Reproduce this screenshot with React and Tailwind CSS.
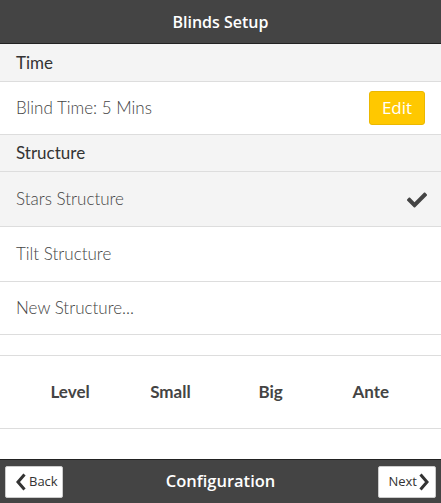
import React from 'react';

const Check = () => (
  <svg viewBox="0 0 512 512" className="w-[20px] h-[20px] fill-[#444]">
    <path d="M173.9 439.4l-166.4-166.4c-10-10-10-26.2 0-36.2l36.2-36.2c10-10 26.2-10 36.2 0L192 312.7 432.1 72.6c10-10 26.2-10 36.2 0l36.2 36.2c10 10 10 26.2 0 36.2l-294.4 294.4c-10 10-26.2 10-36.2 0z" />
  </svg>
);

const Chevron = ({ dir }) => (
  <svg viewBox="0 0 10 18" className="w-[10px] h-[18px]">
    <polyline
      points={dir === 'left' ? '8.5,1.5 2,9 8.5,16.5' : '1.5,1.5 8,9 1.5,16.5'}
      fill="none"
      stroke="#333"
      strokeWidth="3"
    />
  </svg>
);

const SectionHeader = ({ children, h }) => (
  <div className={`${h} shrink-0 flex items-center px-4 bg-[#f4f4f4] border-b border-[#ddd] text-[17px] text-[#333]`}>
    {children}
  </div>
);

const Row = ({ children, right, active, h = 'h-[55px]' }) => (
  <div
    className={`${h} shrink-0 flex items-center justify-between px-4 border-b border-[#ddd] text-[17px] text-[#444] ${
      active ? 'bg-[#f4f4f4]' : 'bg-white'
    }`}
  >
    <span className="font-light">{children}</span>
    {right}
  </div>
);

export default function App() {
  return (
    <div className="w-[441px] h-[503px] flex flex-col bg-white overflow-hidden font-['Lato',sans-serif]">
      {/* Header */}
      <div className="h-[44px] shrink-0 flex items-center justify-center bg-[#444] border-b border-[#222] font-['Open_Sans',sans-serif] font-semibold text-[16px] text-white">
        Blinds Setup
      </div>

      <SectionHeader h="h-[38px]">Time</SectionHeader>
      <Row
        h="h-[53px]"
        right={
          <button className="w-[56px] h-[34px] rounded-[3px] bg-[#ffc800] border border-[#ebb800] text-white text-[17px] font-normal font-['Open_Sans',sans-serif]">
            Edit
          </button>
        }
      >
        Blind Time: 5 Mins
      </Row>

      <SectionHeader h="h-[37px]">Structure</SectionHeader>
      <Row active right={<span className="-mr-[2px] mt-[1px]"><Check /></span>}>Stars Structure</Row>
      <Row>Tilt Structure</Row>
      <Row h="h-[53px]">New Structure...</Row>

      <div className="h-[21px] shrink-0 border-b border-[#ddd]" />

      {/* Columns */}
      <div className="h-[73px] shrink-0 border-b border-[#ddd] px-5 grid grid-cols-4 items-center text-center font-bold text-[17px] text-[#444]">
        <span>Level</span>
        <span>Small</span>
        <span>Big</span>
        <span>Ante</span>
      </div>

      <div className="flex-1" />

      {/* Footer */}
      <div className="h-[44px] shrink-0 flex items-center justify-between px-[5px] bg-[#444] border-t border-[#222] font-['Open_Sans',sans-serif]">
        <button className="w-[58px] h-[32px] flex items-center gap-[3px] pl-[10px] bg-white border border-[#ccc] rounded-[2px] text-[13px] text-[#333]">
          <Chevron dir="left" />
          Back
        </button>
        <span className="font-semibold text-[16.5px] text-white">Configuration</span>
        <button className="w-[58px] h-[32px] flex items-center justify-end gap-[2px] pr-[6px] bg-white border border-[#ccc] rounded-[2px] text-[13px] text-[#333]">
          Next
          <Chevron dir="right" />
        </button>
      </div>
    </div>
  );
}
